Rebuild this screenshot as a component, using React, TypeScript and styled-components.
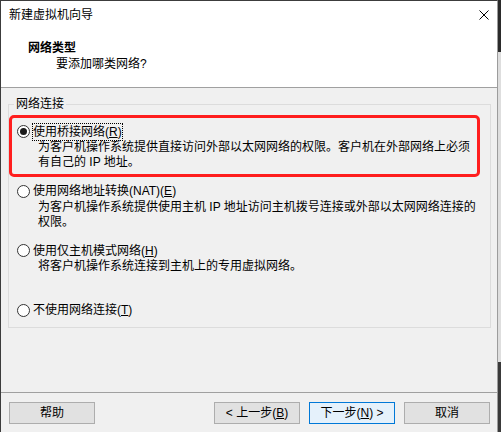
import React from 'react';
import styled, { createGlobalStyle, css } from 'styled-components';

const GlobalStyle = createGlobalStyle`
  html, body {
    margin: 0;
    padding: 0;
    background: #2b2b2b;
  }
  body {
    font-family: "Liberation Sans", "Noto Sans CJK SC", sans-serif;
    font-size: 12px;
    color: #000;
  }
`;

const Page = styled.div`
  display: flex;
  width: 501px;
  height: 432px;
  overflow: hidden;
`;

const Window = styled.div`
  width: 498px;
  height: 432px;
  box-sizing: border-box;
  display: flex;
  flex-direction: column;
  background: #f0f0f0;
  border-top: 1px solid #3c3c3c;
  border-left: 1px solid #3c3c3c;
  border-right: 1px solid #9c9c9c;
`;

const Backdrop = styled.div`
  flex: 1;
  background: linear-gradient(
    to bottom,
    #2b2b2b 0 52px,
    #dedede 52px 362px,
    #3a3a3a 362px
  );
`;

const Header = styled.div`
  height: 87px;
  box-sizing: border-box;
  background: #fff;
  border-bottom: 1px solid #a0a0a0;
`;

const TitleBar = styled.div`
  height: 28px;
  display: flex;
  align-items: center;
  justify-content: space-between;
  padding: 1px 8px 0;
  box-sizing: border-box;
  line-height: 15px;
`;

const CloseIcon = styled.svg`
  width: 10px;
  height: 10px;
  display: block;
  margin-top: -1px;
`;

const HeaderText = styled.div<{ $bold?: boolean; $indent: number }>`
  line-height: 16px;
  padding-left: ${p => p.$indent}px;
  font-weight: ${p => (p.$bold ? 700 : 400)};
`;

const HeaderBody = styled.div`
  padding-top: 11px;
`;

const Body = styled.div`
  flex: 1;
  padding: 8px 6px 0 7px;
`;

const Group = styled.fieldset`
  box-sizing: border-box;
  width: 483px;
  height: 232px;
  margin: 0;
  padding: 6px 0 0 0;
  min-width: 0;
  border: 1px solid #dcdcdc;
`;

const Legend = styled.legend`
  margin-left: 5px;
  padding: 1px 2px 0;
  line-height: 15px;
`;

const Options = styled.div`
  display: flex;
  flex-direction: column;
  gap: 3.5px;
  margin-left: 3px;
  width: 465px;
`;

const Option = styled.div<{ $highlight?: boolean }>`
  height: 56px;
  box-sizing: border-box;
  padding: 5.5px 0 0 5px;
  border-radius: 2px;
  ${p =>
    p.$highlight &&
    css`
      outline: 3px solid #ff1e1e;
    `}
  &:last-child {
    height: auto;
  }
`;

const RadioRow = styled.div`
  display: flex;
  align-items: center;
  gap: 3px;
`;

const Radio = styled.span<{ $checked?: boolean }>`
  position: relative;
  width: 13px;
  height: 13px;
  box-sizing: border-box;
  border-radius: 50%;
  border: 1px solid #333;
  background: #fff;
  flex: none;
  ${p =>
    p.$checked &&
    css`
      &::after {
        content: '';
        position: absolute;
        left: 2px;
        top: 2px;
        width: 7px;
        height: 7px;
        border-radius: 50%;
        background: #1a1a1a;
      }
    `}
`;

const Label = styled.span<{ $focused?: boolean }>`
  line-height: 15px;
  padding-top: 1px;
  white-space: nowrap;
  ${p =>
    p.$focused &&
    css`
      outline: 1px dotted #000;
      outline-offset: 0px;
    `}
`;

const Desc = styled.div`
  margin-left: 21px;
  margin-top: 0.5px;
  line-height: 15px;
  white-space: nowrap;
`;

const BottomBar = styled.div`
  height: 40px;
  box-sizing: border-box;
  border-top: 1px solid #a0a0a0;
  display: flex;
  align-items: flex-start;
  gap: 9px;
  padding: 9px 7px 0 8px;
`;

const Button = styled.button<{ $default?: boolean; $push?: boolean }>`
  width: 86px;
  height: 22px;
  box-sizing: border-box;
  padding: 1px 0 0;
  font: inherit;
  line-height: 19px;
  color: #000;
  background: ${p => (p.$default ? '#e5f1fb' : '#e1e1e1')};
  border: 1px solid ${p => (p.$default ? '#0078d7' : '#adadad')};
  margin-right: ${p => (p.$push ? 'auto' : '0')};
`;

interface INetOption {
  label: React.ReactNode;
  desc: string[];
  checked?: boolean;
}

const options: INetOption[] = [
  {
    label: <>使用桥接网络(<u>R</u>)</>,
    desc: [
      '为客户机操作系统提供直接访问外部以太网网络的权限。客户机在外部网络上必须',
      '有自己的 IP 地址。'
    ],
    checked: true
  },
  {
    label: <>使用网络地址转换(NAT)(<u>E</u>)</>,
    desc: [
      '为客户机操作系统提供使用主机 IP 地址访问主机拨号连接或外部以太网网络连接的',
      '权限。'
    ]
  },
  {
    label: <>使用仅主机模式网络(<u>H</u>)</>,
    desc: ['将客户机操作系统连接到主机上的专用虚拟网络。']
  },
  {
    label: <>不使用网络连接(<u>T</u>)</>,
    desc: []
  }
];

const App: React.FC = () => {
  return (
    <Page>
      <GlobalStyle />
      <Window>
        <Header>
          <TitleBar>
            <span>新建虚拟机向导</span>
            <CloseIcon viewBox="0 0 10 10">
              <path d="M0.5 0.5 L9.5 9.5 M9.5 0.5 L0.5 9.5" stroke="#000" strokeWidth="1" />
            </CloseIcon>
          </TitleBar>
          <HeaderBody>
            <HeaderText $bold $indent={27}>
              网络类型
            </HeaderText>
            <HeaderText $indent={55}>要添加哪类网络?</HeaderText>
          </HeaderBody>
        </Header>
        <Body>
          <Group>
            <Legend>网络连接</Legend>
            <Options>
              {options.map((opt, index) => (
                <Option key={index} $highlight={opt.checked}>
                  <RadioRow>
                    <Radio $checked={opt.checked} />
                    <Label $focused={opt.checked}>{opt.label}</Label>
                  </RadioRow>
                  {opt.desc.length > 0 && (
                    <Desc>
                      {opt.desc.map((line, i) => (
                        <React.Fragment key={i}>
                          {i > 0 && <br />}
                          {line}
                        </React.Fragment>
                      ))}
                    </Desc>
                  )}
                </Option>
              ))}
            </Options>
          </Group>
        </Body>
        <BottomBar>
          <Button $push>帮助</Button>
          <Button>
            &lt; 上一步(<u>B</u>)
          </Button>
          <Button $default>
            下一步(<u>N</u>) &gt;
          </Button>
          <Button>取消</Button>
        </BottomBar>
      </Window>
      <Backdrop />
    </Page>
  );
};

export default App;
